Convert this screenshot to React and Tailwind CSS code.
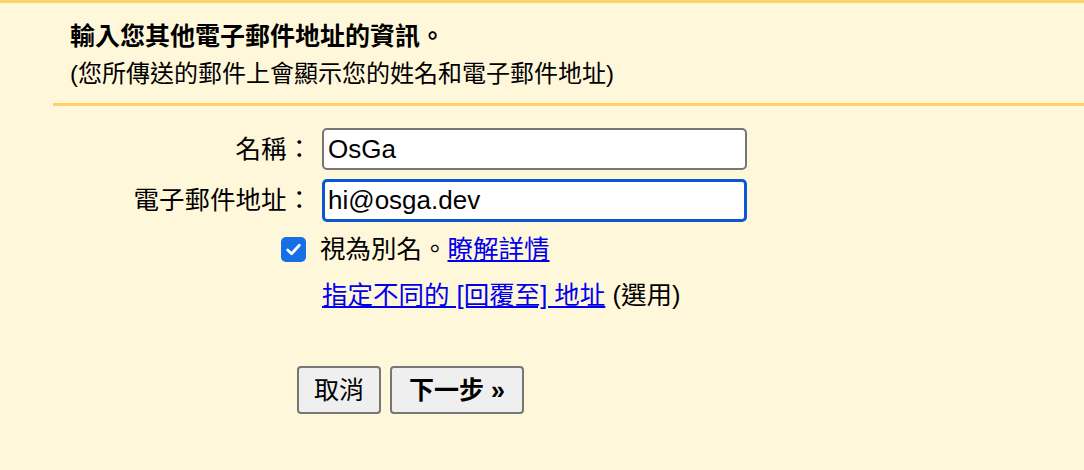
import React from "react";

const font = { fontFamily: '"Liberation Sans", "Noto Sans CJK TC", sans-serif' };

export default function App() {
  return (
    <div
      className="w-[1084px] h-[470px] bg-[#fff7d9] border-t-[3px] border-[#fcd46d] text-black overflow-hidden"
      style={font}
    >
      <div className="ml-[53px]">
        <div className="pl-[17px] pt-[14px] pb-[10px] border-b-[3px] border-[#fdd168]">
          <div className="text-[25px] font-bold leading-[38px]">輸入您其他電子郵件地址的資訊。</div>
          <div className="text-[24px] leading-[38px]">(您所傳送的郵件上會顯示您的姓名和電子郵件地址)</div>
        </div>
      </div>

      <div className="pt-[22px] flex flex-col">
        <div className="flex items-center h-[42px]">
          <div className="w-[312px] text-right text-[25.5px]">名稱：</div>
          <div className="ml-[10px] w-[425px] h-[42px] bg-white border-2 border-[#767676] rounded-[5px] flex items-center px-[4px] text-[26px]">
            OsGa
          </div>
        </div>
        <div className="flex items-center h-[43px] mt-[9px]">
          <div className="w-[312px] text-right text-[25.5px]">電子郵件地址：</div>
          <div className="ml-[10px] w-[425px] h-[43px] bg-white border-[3px] border-[#0b57d0] rounded-[5px] flex items-center px-[3px] text-[26px]">
            hi@osga.dev
          </div>
        </div>

        <div className="flex items-center mt-[14px] ml-[281px] h-[26px]">
          <div className="w-[25px] h-[25px] rounded-[5px] bg-[#1570e6] flex items-center justify-center">
            <svg width="17" height="17" viewBox="0 0 16 16" fill="none">
              <path d="M2.5 8.5 L6.2 12 L13.5 4" stroke="white" strokeWidth="2.6" strokeLinecap="round" strokeLinejoin="round" />
            </svg>
          </div>
          <span className="ml-[14px] text-[25.5px]">
            視為別名。<a href="#" className="text-[#0000ee] underline">瞭解詳情</a>
          </span>
        </div>

        <div className="ml-[322px] mt-[14px] text-[25.5px]">
          <a href="#" className="text-[#0000ee] underline">指定不同的 [回覆至] 地址</a> (選用)
        </div>

        <div className="flex ml-[297px] mt-[52px] gap-[9px]">
          <button className="h-[48px] px-[15px] bg-[#efefef] border-2 border-[#767676] rounded-[4px] text-[25px]">
            取消
          </button>
          <button className="h-[48px] px-[17px] bg-[#efefef] border-2 border-[#767676] rounded-[4px] text-[25px] font-bold">
            下一步 »
          </button>
        </div>
      </div>
    </div>
  );
}
